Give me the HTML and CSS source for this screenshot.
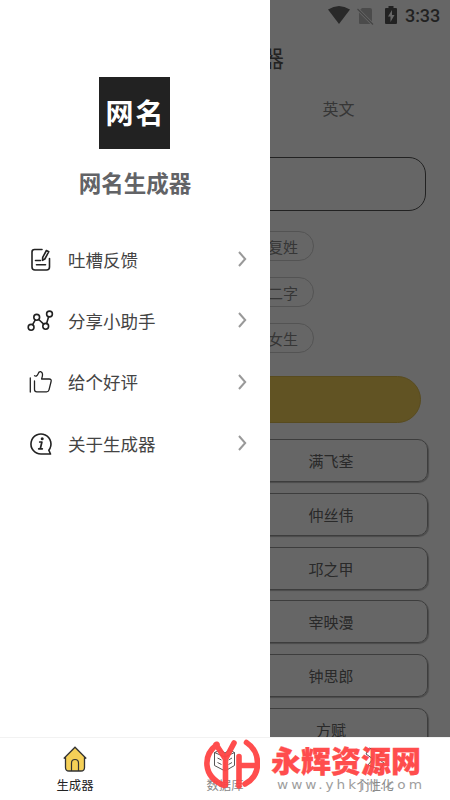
FILE: index.html
```html
<!DOCTYPE html>
<html lang="zh-CN">
<head>
<meta charset="utf-8">
<title>网名生成器</title>
<link rel="stylesheet" href="styles.css">
</head>
<body>
<div class="app">
  <main class="page">
    <div class="status">
      <svg class="wifi" width="22" height="18" viewBox="0 0 22 18"><path d="M0 3.500Q11-3.500 22 3.500L11 18Z" fill="#666"/></svg>
      <svg class="sim" width="17" height="18" viewBox="0 0 17 18"><path d="M2 4 5 1h8q2 0 2 2v13q0 1-1 1H3q-1 0-1-1Z" fill="#bbb"/><path d="M.5 2 16 17.500" stroke="#fff" stroke-width="3"/><path d="M.5 2 16 17.500" stroke="#aaa" stroke-width="1.200"/></svg>
      <svg class="battery" width="12" height="18" viewBox="0 0 12 18"><path d="M3.500 0h5v2H11q1 0 1 1v14q0 1-1 1H1q-1 0-1-1V3q0-1 1-1h2.500Z" fill="#555"/><path d="M7 4 3 10.500h2.500V16L9.500 9H7Z" fill="#fff"/></svg>
      <span class="time">3:33</span>
    </div>
    <h1 class="page-title">器</h1>
    <div class="tabs"><span>英文</span></div>
    <div class="field"></div>
    <div class="options">
      <span class="chip">复姓</span>
      <span class="chip">二字</span>
      <span class="chip">女生</span>
    </div>
    <div class="generate"></div>
    <div class="names">
      <div class="name">满飞荃</div>
      <div class="name">仲丝伟</div>
      <div class="name">邛之甲</div>
      <div class="name">宰映漫</div>
      <div class="name">钟思郎</div>
      <div class="name">方赋</div>
    </div>
  </main>
  <div class="scrim"></div>
  <aside class="drawer">
    <div class="logo">网名</div>
    <h2 class="drawer-title">网名生成器</h2>
    <nav class="menu">
      <a class="item">
        <svg class="icon" width="28" height="28" viewBox="0 0 28 28"><path d="M15 3.500H7.500Q5 3.500 5 6v15q0 3 3 3h11.500q3 0 3-3v-8.500M8.500 14.500h5M9.500 18.800h9"/><path d="m19.400 4.500 2.400 1.200-4 7.300-2.300 1.400.2-3Z"/></svg>
        <span>吐槽反馈</span><svg class="arrow" width="9" height="16" viewBox="0 0 9 16"><path d="m1 1 6.200 7L1 15"/></svg>
      </a>
      <a class="item">
        <svg class="icon" width="28" height="28" viewBox="0 0 28 28"><circle cx="4.100" cy="20.300" r="2.900"/><circle cx="9.700" cy="10.300" r="2.900"/><circle cx="18.700" cy="19.300" r="2.900"/><circle cx="22.500" cy="7" r="2.900"/><path d="m5.600 17.700 2.700-4.800M11.700 12.500l5 4.700M19.600 16.500l2-6.800"/></svg>
        <span>分享小助手</span><svg class="arrow" width="9" height="16" viewBox="0 0 9 16"><path d="m1 1 6.200 7L1 15"/></svg>
      </a>
      <a class="item">
        <svg class="icon thin" width="28" height="28" viewBox="0 0 28 28"><path d="M3.300 10v14M7.500 13v8.500q0 2.300 2.300 2.300h9.700q2 0 2.500-2l2.100-8.300q.6-2.500-2-2.500h-7.500q2.300-6.300-1-7.300-1.700-.2-2.500 2-1.300 3.300-3.600 2"/></svg>
        <span>给个好评</span><svg class="arrow" width="9" height="16" viewBox="0 0 9 16"><path d="m1 1 6.200 7L1 15"/></svg>
      </a>
      <a class="item">
        <svg class="icon" width="28" height="28" viewBox="0 0 28 28"><path d="M23.500 24H14A10 10 0 1 1 21.800 20.200Z"/><path d="M12.700 12h2.200l-1.600 6.800h2M11.700 18.800h2" stroke-width="1.700"/><circle cx="15.200" cy="8.800" r="1.500" fill="#222" stroke="none"/></svg>
        <span>关于生成器</span><svg class="arrow" width="9" height="16" viewBox="0 0 9 16"><path d="m1 1 6.200 7L1 15"/></svg>
      </a>
    </nav>
  </aside>
  <footer class="tabbar">
    <a class="tab active"><svg width="26" height="26" viewBox="0 0 26 26"><path d="M1.800 12.500 13 1.200l11.200 11.300-1.700-.8v9.800q0 3.500-3.500 3.500H7q-3.500 0-3.500-3.500v-9.800Z" fill="#f5d057" stroke="#333" stroke-width="1.300"/><path d="M9.500 25v-8q0-3.500 3.500-3.500t3.500 3.500v8" fill="none" stroke="#333" stroke-width="1.200"/></svg><span>生成器</span></a>
    <a class="tab"><svg width="26" height="26" viewBox="0 0 26 26" fill="none" stroke="#555"><path d="M13 7 8.500 4 2.500 6.500v13L13 25l9.500-5.500v-13L17.500 4 13 7v18M2.500 6.500 13 11l9.500-4.500M5.500 12l4 2m-4 2.500 4 2m7-4.500 3.500-2m-3.500 6.500 3.500-2"/></svg><span>数据库</span></a>
    <a class="tab"><svg width="26" height="26" viewBox="0 0 26 26" fill="none" stroke="#555"><path d="m7 2 13 4-5 6 7 5-4 7-12-5 5-6-7-5Z"/></svg><span>个性化</span></a>
  </footer>
  <div class="watermark">
    <svg class="mark" width="56" height="52" viewBox="0 0 56 52" fill="none" stroke="#ff4444" stroke-linecap="round" stroke-linejoin="round" stroke-width="5.600"><path d="M13 6.500C-1 17-2 38 20 47.500M12 6.500 21.500 21V47M21.500 21 30 5"/><path d="M35 18.500V48M35 27.500h18M42.500 4.500C57 14 58 37 41 46"/></svg>
    <div class="mark-text"><div class="mark-name">永辉资源网</div><div class="mark-url">www.yhkjjj.com</div></div>
  </div>
</div>
</body>
</html>
```
FILE: styles.css
```css
* { box-sizing: border-box; }
body { margin: 0; font-family: "Noto Sans CJK SC", sans-serif; background: #fff; }
.app { position: relative; width: 450px; height: 800px; overflow: hidden; display: flex; flex-direction: column; }
.page { height: 737px; overflow: hidden; flex: none; }
.status { height: 32px; padding-right: 10px; display: flex; align-items: center; justify-content: flex-end; }
.wifi { margin-right: 7px; margin-top: -2px; }
.sim { margin-right: 11px; }
.battery { margin-right: 8px; margin-top: -2px; }
.time { font: 500 18px/32px Roboto, sans-serif; color: #555; width: 35px; letter-spacing: -.1px; }
.page-title { margin: 8px 166px 0 0; height: 36px; font-size: 23px; line-height: 35px; font-weight: 400; color: #555; text-align: right; }
.tabs { margin-top: 16px; height: 32px; padding-left: 227px; line-height: 32px; font-size: 16px; color: #888; text-align: center; }
.field { margin: 33px 24px 0; height: 54px; border: 1.500px solid #555; border-radius: 17px; }
.options { margin: 20px 136px 0 0; display: grid; gap: 16px; justify-items: end; }
.chip { width: 62px; height: 30px; border: 1px solid #d0d0d0; border-radius: 15px; font-size: 15px; line-height: 29px; text-align: center; color: #888; }
.generate { margin: 23px 29px 0; height: 47px; border-radius: 24px; background: #f2cf57; border: 1px solid #ddbc4e; }
.names { margin: 16px 22px 0; display: grid; grid-template-columns: 194px; justify-content: end; gap: 10.800px; }
.name { height: 43px; border: 1px solid #999; border-radius: 10px; box-shadow: 1px 1px 1px #bbb; text-align: center; font-size: 15px; line-height: 42px; color: #666; }
.scrim { position: absolute; top: 0; left: 0; width: 450px; height: 737px; background: rgba(0, 0, 0, .6); }
.drawer { position: absolute; top: 0; left: 0; width: 270px; height: 737px; padding-top: 77px; background: #fff; }
.logo { width: 71px; height: 72px; margin-left: 99px; background: #222; color: #fff; font-size: 28px; font-weight: 700; line-height: 71px; text-align: center; letter-spacing: 2px; padding-left: 2px; white-space: nowrap; }
.drawer-title { margin: 16px 0 0; height: 34px; line-height: 34px; font-size: 22.500px; color: #626366; text-align: center; }
.menu { margin-top: 30px; }
.item { height: 61.300px; display: flex; align-items: center; padding: 0 23px 0 27px; color: #444; font-size: 17.500px; }
.item span { margin-top: -1px; }
.icon { margin-right: 13px; fill: none; stroke: #222; stroke-width: 1.600; stroke-linecap: round; stroke-linejoin: round; }
.thin { stroke-width: 1.300; }
.arrow { margin-left: auto; margin-top: -1px; fill: none; stroke: #999; stroke-width: 2; }
.tabbar { height: 63px; border-top: 1px solid #f2f2f2; display: grid; grid-template-columns: repeat(3, 1fr); background: #fff; }
.tab { display: flex; flex-direction: column; align-items: center; padding-top: 8px; font-size: 12.300px; line-height: 18px; color: #888; }
.tab span { margin-top: 4px; }
.active { color: #222; }
.watermark { position: absolute; left: 204px; top: 738px; width: 230px; display: flex; opacity: .95; }
.mark { flex: none; }
.mark-text { margin-left: 11px; }
.mark-name { height: 40px; line-height: 43px; font-size: 30px; font-weight: 900; color: #ff4444; -webkit-text-stroke: .3px #ff4444; white-space: nowrap; }
.mark-url { font: 13px/14px "DejaVu Sans", sans-serif; color: #999; letter-spacing: 2.850px; white-space: nowrap; margin-left: 6px; transform: scaleX(1.05); transform-origin: left; }
```
